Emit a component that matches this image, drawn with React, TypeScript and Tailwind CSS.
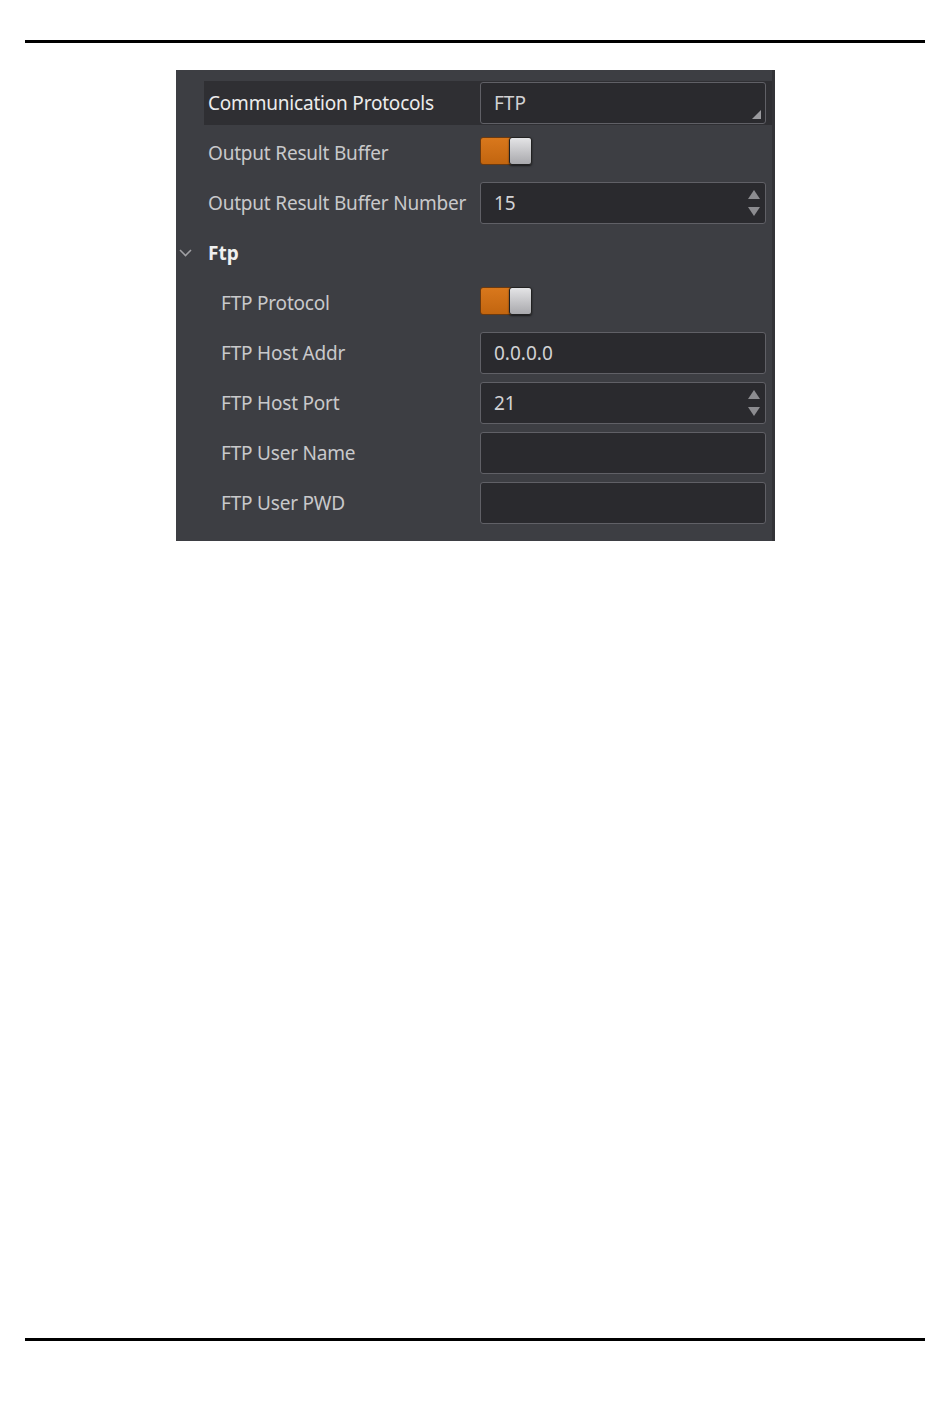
import React from 'react';

const font = { fontFamily: '"Noto Sans", "Open Sans", sans-serif' };

function Toggle() {
  return (
    <div className="-mt-[4px] flex h-[28px] w-[52px] items-stretch">
      <div className="w-[31px] rounded-l-[3px] border border-[#6b3a10] bg-gradient-to-b from-[#d9781c] to-[#c2650f]" />
      <div className="-ml-[2px] w-[23px] rounded-[3px] border border-[#222] bg-gradient-to-b from-[#e4e4e6] to-[#a9a9ad] shadow-[0_1px_2px_rgba(0,0,0,0.6)]" />
    </div>
  );
}

function Spinner() {
  return (
    <div className="flex flex-col items-center gap-[8px] pr-[5px]">
      <div className="h-0 w-0 border-x-[6px] border-b-[9px] border-x-transparent border-b-[#8c8c90]" />
      <div className="h-0 w-0 border-x-[6px] border-t-[9px] border-x-transparent border-t-[#8c8c90]" />
    </div>
  );
}

function Field({ value, spin, combo }: { value?: string; spin?: boolean; combo?: boolean }) {
  return (
    <div className="relative flex h-[42px] w-[286px] items-center justify-between rounded-[3px] border border-[#606066] bg-[#2a2a2e] pl-[13px] text-[19px] text-[#d2d2d4]">
      <span>{value}</span>
      {spin && <Spinner />}
      {combo && (
        <div className="absolute bottom-[4px] right-[4px] h-0 w-0 border-b-[9px] border-l-[9px] border-l-transparent border-b-[#9a9a9e]" />
      )}
    </div>
  );
}

function Row({
  label,
  indent,
  children,
  active,
}: {
  label: string;
  indent?: boolean;
  children: React.ReactNode;
  active?: boolean;
}) {
  return (
    <div className="flex h-[50px] items-center">
      <div
        className={`flex h-[44px] flex-1 items-center ${active ? 'ml-[28px] bg-[#2f2f33] pl-[4px]' : 'pl-[32px]'}`}
      >
        <div
          className={`w-[272px] shrink-0 text-[19px] tracking-[-0.2px] ${indent ? 'pl-[13px]' : ''} ${
            active ? 'text-[#ececec]' : 'text-[#c9c9cb]'
          }`}
        >
          {label}
        </div>
        {children}
      </div>
    </div>
  );
}

export default function App() {
  return (
    <div className="min-h-[1408px] bg-white" style={font}>
      <div className="h-[40px]" />
      <div className="mx-[25px] h-[3px] bg-black" />
      <div className="flex justify-center pt-[27px]">
        <div className="ml-[1px] w-[599px] border-r-[3px] border-[#333337] bg-[#3d3e43] pb-[13px] pt-[8px]">
          <Row label="Communication Protocols" active>
            <Field value="FTP" combo />
          </Row>
          <Row label="Output Result Buffer">
            <Toggle />
          </Row>
          <Row label="Output Result Buffer Number">
            <Field value="15" spin />
          </Row>
          <div className="flex h-[50px] items-center">
            <svg width="32" height="20" viewBox="0 0 32 20" className="shrink-0">
              <path d="M4 7 L9.5 12.5 L15 7" fill="none" stroke="#a0a0a4" strokeWidth="1.6" />
            </svg>
            <span className="text-[19px] font-bold text-[#f0f0f0]">Ftp</span>
          </div>
          <Row label="FTP Protocol" indent>
            <Toggle />
          </Row>
          <Row label="FTP Host Addr" indent>
            <Field value="0.0.0.0" />
          </Row>
          <Row label="FTP Host Port" indent>
            <Field value="21" spin />
          </Row>
          <Row label="FTP User Name" indent>
            <Field />
          </Row>
          <Row label="FTP User PWD" indent>
            <Field />
          </Row>
        </div>
      </div>
      <div className="h-[797px]" />
      <div className="mx-[25px] h-[3px] bg-black" />
    </div>
  );
}
